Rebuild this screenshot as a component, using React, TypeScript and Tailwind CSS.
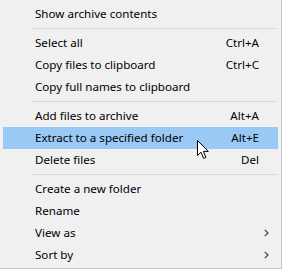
import { ReactNode } from 'react';

type Item =
  | { kind: 'sep' }
  | { kind: 'item'; label: string; shortcut?: string; sub?: boolean; active?: boolean };

const ITEMS: Item[] = [
  { kind: 'item', label: 'Show archive contents' },
  { kind: 'sep' },
  { kind: 'item', label: 'Select all', shortcut: 'Ctrl+A' },
  { kind: 'item', label: 'Copy files to clipboard', shortcut: 'Ctrl+C' },
  { kind: 'item', label: 'Copy full names to clipboard' },
  { kind: 'sep' },
  { kind: 'item', label: 'Add files to archive', shortcut: 'Alt+A' },
  { kind: 'item', label: 'Extract to a specified folder', shortcut: 'Alt+E', active: true },
  { kind: 'item', label: 'Delete files', shortcut: 'Del' },
  { kind: 'sep' },
  { kind: 'item', label: 'Create a new folder' },
  { kind: 'item', label: 'Rename' },
  { kind: 'item', label: 'View as', sub: true },
  { kind: 'item', label: 'Sort by', sub: true },
];

function Chevron() {
  return (
    <svg width="5" height="8" viewBox="0 0 5 8" className="ml-[5px]">
      <path d="M0.8 0.8 L4 4 L0.8 7.2" fill="none" stroke="#3c3c3c" strokeWidth="1.2" />
    </svg>
  );
}

function Row({ children, active }: { children: ReactNode; active?: boolean }) {
  return (
    <div className={`h-[22px] flex items-center pl-[32px] ${active ? 'bg-[#99c9f4]' : ''}`}>
      {children}
    </div>
  );
}

// Windows arrow cursor
function Cursor() {
  return (
    <svg width="13" height="20" viewBox="0 0 13 20" className="absolute left-[197px] top-[140px]">
      <path
        d="M0.5 0.5 L0.5 15.5 L4 12.2 L6.6 18.4 L8.9 17.4 L6.4 11.4 L11.3 11.4 Z"
        fill="#ffffff"
        stroke="#000000"
        strokeWidth="1"
        strokeLinejoin="miter"
      />
    </svg>
  );
}

export default function App() {
  return (
    <div
      className="relative w-[282px] h-[269px] bg-[#f0f0f0] border-r border-b border-[#c6c6c6] pt-[3px] px-[3px] text-[11.6px] text-black"
      style={{ fontFamily: '"Noto Sans", "Liberation Sans", sans-serif' }}
    >
      {ITEMS.map((it, idx) =>
        it.kind === 'sep' ? (
          <div key={idx} className="h-[7px] flex items-center pl-[28px] pr-[1px]">
            <div className="h-px w-full bg-[#d7d7d7]" />
          </div>
        ) : (
          <Row key={idx} active={it.active}>
            <span className="flex-1 whitespace-nowrap">{it.label}</span>
            {it.shortcut && <span className="whitespace-nowrap">{it.shortcut}</span>}
            <div className="w-[19px] flex items-center">{it.sub && <Chevron />}</div>
          </Row>
        )
      )}
      <Cursor />
    </div>
  );
}
